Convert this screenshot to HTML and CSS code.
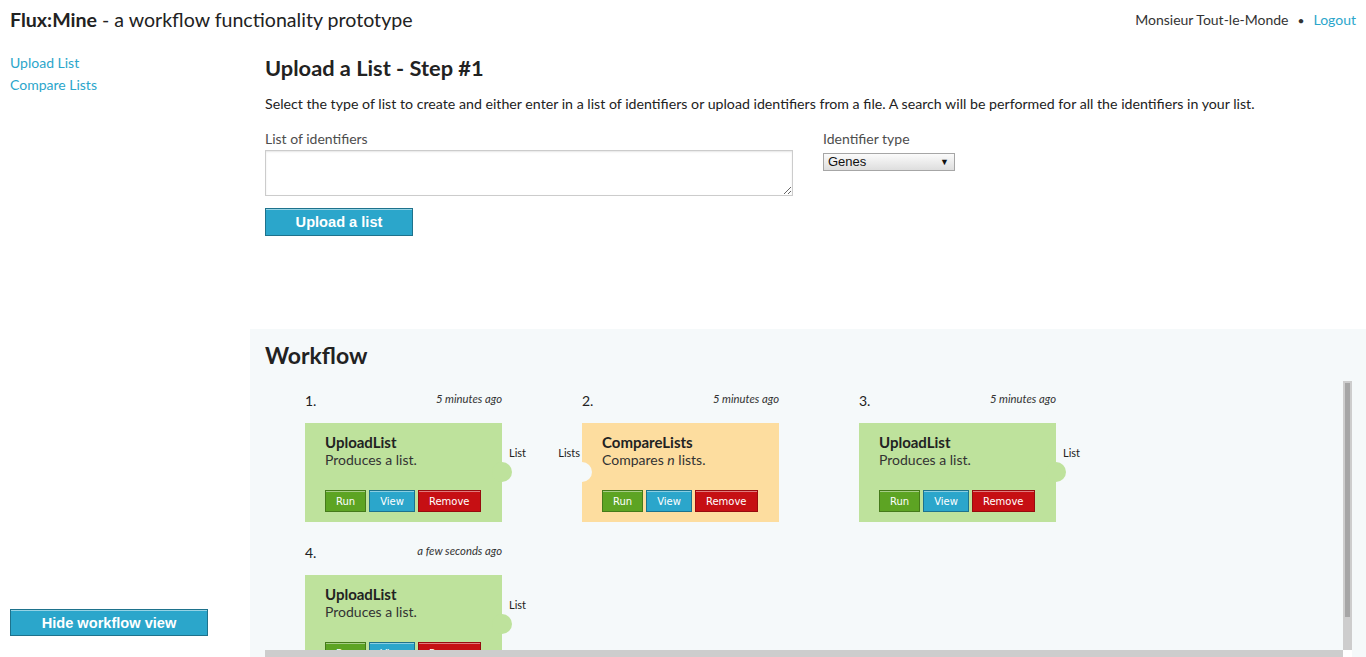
FILE: index.html
```html
<!DOCTYPE html>
<html lang="en">
<head>
<meta charset="utf-8">
<title>Flux:Mine</title>
<link rel="stylesheet" href="styles.css">
</head>
<body>
<header class="topbar">
  <h1 class="brand"><strong>Flux:Mine</strong> - a workflow functionality prototype</h1>
  <div class="user"><span>Monsieur Tout-le-Monde</span><span class="dot">•</span><a href="#">Logout</a></div>
</header>
<div class="layout">
  <aside class="sidebar">
    <nav class="side-nav">
      <a href="#">Upload List</a>
      <a href="#">Compare Lists</a>
    </nav>
    <button class="btn btn-hide">Hide workflow view</button>
  </aside>
  <main class="main">
    <section class="step">
      <h2 class="title title-step">Upload a List - Step #1</h2>
      <p class="intro">Select the type of list to create and either enter in a list of identifiers or upload identifiers from a file. A search will be performed for all the identifiers in your list.</p>
      <div class="form-row">
        <div class="col">
          <label class="label">List of identifiers</label>
          <textarea class="ids"></textarea>
          <button class="btn btn-upload">Upload a list</button>
        </div>
        <div class="col">
          <label class="label">Identifier type</label>
          <span class="select-wrap"><select class="select"><option>Genes</option></select></span>
        </div>
      </div>
    </section>
    <section class="workflow">
      <h2 class="title">Workflow</h2>
      <div class="wf-frame">
        <div class="wf-view">
          <div class="wf-grid">
            <div class="wf-item">
              <div class="wf-head"><span class="wf-num">1.</span><span class="wf-time">5 minutes ago</span></div>
              <div class="card card-green">
                <div class="card-title">UploadList</div>
                <div class="card-desc">Produces a list.</div>
                <div class="actions"><button class="sbtn run">Run</button><button class="sbtn view">View</button><button class="sbtn remove">Remove</button></div>
                <span class="port port-out"></span><span class="port-label out">List</span>
              </div>
            </div>
            <div class="wf-item">
              <div class="wf-head"><span class="wf-num">2.</span><span class="wf-time">5 minutes ago</span></div>
              <div class="card card-orange">
                <div class="card-title">CompareLists</div>
                <div class="card-desc">Compares <em>n</em> lists.</div>
                <div class="actions"><button class="sbtn run">Run</button><button class="sbtn view">View</button><button class="sbtn remove">Remove</button></div>
                <span class="port port-in"></span><span class="port-label in">Lists</span>
              </div>
            </div>
            <div class="wf-item">
              <div class="wf-head"><span class="wf-num">3.</span><span class="wf-time">5 minutes ago</span></div>
              <div class="card card-green">
                <div class="card-title">UploadList</div>
                <div class="card-desc">Produces a list.</div>
                <div class="actions"><button class="sbtn run">Run</button><button class="sbtn view">View</button><button class="sbtn remove">Remove</button></div>
                <span class="port port-out"></span><span class="port-label out">List</span>
              </div>
            </div>
            <div class="wf-item">
              <div class="wf-head"><span class="wf-num">4.</span><span class="wf-time">a few seconds ago</span></div>
              <div class="card card-green">
                <div class="card-title">UploadList</div>
                <div class="card-desc">Produces a list.</div>
                <div class="actions"><button class="sbtn run">Run</button><button class="sbtn view">View</button><button class="sbtn remove">Remove</button></div>
                <span class="port port-out"></span><span class="port-label out">List</span>
              </div>
            </div>
          </div>
        </div>
        <div class="vbar"><div class="vthumb"></div></div>
        <div class="hbar"></div>
        <div class="corner"></div>
      </div>
    </section>
  </main>
</div>
</body>
</html>
```
FILE: styles.css
```css
html, body {
  margin: 0;
  padding: 0;
  height: 100%;
  overflow: hidden;
}
body {
  font-family: Lato, "Open Sans", sans-serif;
  color: #222;
  background: #fff;
}
a {
  color: #2ba6cb;
  text-decoration: none;
}

.topbar {
  height: 40px;
  display: flex;
  align-items: center;
  justify-content: space-between;
  padding: 0 10px;
}
.brand {
  margin: 0;
  font-size: 19.6px;
  font-weight: 400;
  line-height: 42px;
}
.brand strong { font-weight: 700; }
.user {
  font-size: 14px;
  line-height: 40px;
  color: #333;
}
.user .dot {
  margin: 0 9px 0 9px;
  font-size: 12px;
}

.layout {
  display: grid;
  grid-template-columns: 250px 1fr;
  height: calc(100vh - 40px);
}
.sidebar {
  display: flex;
  flex-direction: column;
  padding: 12px 0 21px 10px;
}
.side-nav {
  display: flex;
  flex-direction: column;
  font-size: 14px;
  line-height: 22px;
}
.side-nav a { align-self: flex-start; }

.btn {
  font-family: "Liberation Sans", Arial, sans-serif;
  font-weight: 700;
  font-size: 14.6px;
  color: #fff;
  background: #2ba6cb;
  border: 1px solid #1e728c;
  box-shadow: inset 0 1px 0 rgba(255,255,255,0.5);
  padding: 0;
  cursor: pointer;
}
.btn-hide {
  margin-top: auto;
  width: 198px;
  height: 27px;
}
.btn-upload {
  display: block;
  width: 148px;
  height: 28px;
  margin-top: 12px;
}

.main {
  display: flex;
  flex-direction: column;
  min-width: 0;
}
.step {
  padding: 14px 15px 0;
}
.title {
  margin: 0;
  font-size: 23px;
  font-weight: 700;
  line-height: 28px;
  color: #222;
}
.title-step { font-size: 21.8px; }
.intro {
  margin: 12px 0 0;
  font-size: 14.2px;
  line-height: 20px;
}
.form-row {
  display: grid;
  grid-template-columns: 1fr 1fr;
  column-gap: 30px;
  margin-top: 15px;
}
.col { display: flex; flex-direction: column; align-items: flex-start; }
.label {
  font-size: 14px;
  line-height: 20px;
  color: #4d4d4d;
}
.ids {
  box-sizing: border-box;
  width: 100%;
  height: 46px;
  margin: 1px 0 0;
  border: 1px solid #ccc;
  box-shadow: inset 0 1px 2px rgba(0,0,0,0.1);
  background: #fff;
  font-family: Lato, sans-serif;
  font-size: 13px;
}
.select-wrap {
  position: relative;
  display: inline-block;
  margin-top: 4px;
}
.select {
  -webkit-appearance: none;
  appearance: none;
  display: block;
  box-sizing: border-box;
  width: 132px;
  height: 18px;
  padding: 0 0 0 4px;
  margin: 0;
  border: 1px solid #a6a6a6;
  border-radius: 0;
  background: linear-gradient(#fbfbfb, #dedede);
  font-family: "Liberation Sans", Arial, sans-serif;
  font-size: 13px;
  line-height: 16px;
  color: #111;
}
.select-wrap::after {
  content: "▼";
  position: absolute;
  right: 6px;
  top: 3px;
  font-size: 9px;
  line-height: 12px;
  color: #111;
  pointer-events: none;
}

.workflow {
  margin-top: auto;
  height: 328px;
  flex-shrink: 0;
  box-sizing: border-box;
  padding: 12px 14px 0 15px;
  background: #f5f9fa;
  overflow: hidden;
}
.wf-frame {
  margin-top: 12px;
  display: grid;
  grid-template-columns: 1fr 9px;
  grid-template-rows: 269px 9px;
}
.wf-view {
  overflow: hidden;
}
.vbar {
  background: #cdcdcd;
  padding: 2px;
  box-sizing: border-box;
}
.vthumb {
  height: 234px;
  background: #a6a6a6;
}
.hbar { background: #cdcdcd; }
.corner { background: #fff; }

.wf-grid {
  display: grid;
  grid-template-columns: repeat(3, 197px);
  column-gap: 80px;
  row-gap: 21px;
  padding: 10px 0 22px 40px;
}
.wf-head {
  display: flex;
  justify-content: space-between;
  align-items: flex-start;
  height: 32px;
}
.wf-num {
  font-size: 14px;
  line-height: 20px;
}
.wf-time {
  font-size: 11.3px;
  line-height: 16px;
  font-style: italic;
  color: #333;
}
.card {
  position: relative;
  box-sizing: border-box;
  height: 99px;
  padding: 10px 20px;
}
.card-green { background: #bee29c; }
.card-orange { background: #fddd9f; }
.card-title {
  font-size: 15px;
  font-weight: 700;
  line-height: 18px;
}
.card-desc {
  font-size: 14px;
  line-height: 18px;
  color: #333;
}
.actions {
  display: flex;
  gap: 3px;
  margin-top: 21px;
}
.sbtn {
  box-sizing: border-box;
  height: 22px;
  padding: 2px 10px 0;
  border: 1px solid;
  box-shadow: inset 0 1px 0 rgba(255,255,255,0.45);
  font-family: "DejaVu Sans", sans-serif;
  font-size: 10px;
  color: #fff;
  line-height: 18px;
  cursor: pointer;
}
.run { background: #5da423; border-color: #457a1a; }
.view { background: #2ba6cb; border-color: #1e728c; }
.remove { background: #c60f13; border-color: #970b0e; }

.port {
  position: absolute;
  top: 39px;
  width: 20px;
  height: 20px;
  border-radius: 50%;
}
.port-out {
  right: -10px;
  background: #bee29c;
}
.port-in {
  left: -10px;
  background: #f5f9fa;
}
.port-label {
  position: absolute;
  top: 23px;
  font-size: 11px;
  line-height: 14px;
  color: #222;
}
.port-label.out { left: calc(100% + 7px); }
.port-label.in { right: calc(100% + 2px); }
```
